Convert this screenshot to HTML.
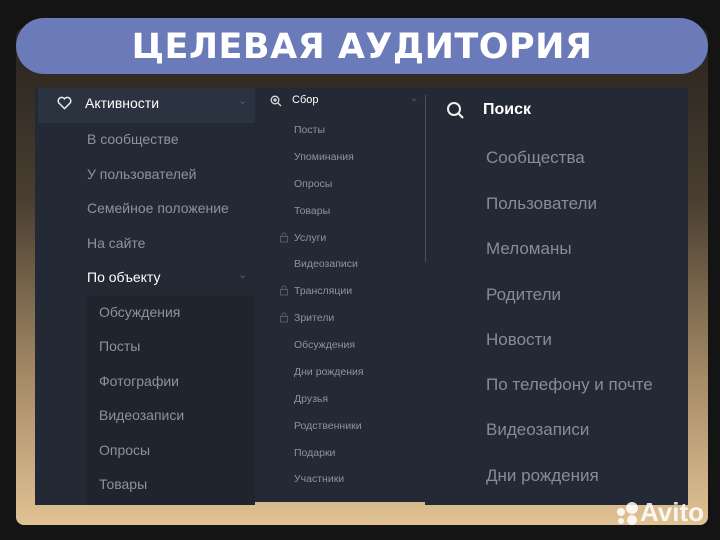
<!DOCTYPE html><html><head><meta charset="utf-8"><style>
*{margin:0;padding:0;box-sizing:border-box}
body{width:720px;height:540px;background:#141414;position:relative;overflow:hidden;font-family:"Liberation Sans","DejaVu Sans",sans-serif}
.card{position:absolute;left:16px;top:28px;width:692px;height:497px;border-radius:8px;background:linear-gradient(180deg,#27231e 0%,#4a3f31 35%,#a48a66 70%,#e0c294 100%)}
.pill{position:absolute;left:16px;top:18px;width:692px;height:56px;border-radius:28px;background:#6b7ab8;color:#fff;font:900 35px "DejaVu Sans","Liberation Sans",sans-serif;text-align:center;line-height:58px;letter-spacing:0.5px;transform-origin:center}
.panel{position:absolute;left:35px;top:88px;width:653px;height:417px;background:#242a35}
.t{position:absolute;white-space:nowrap}
.l{font-size:14px;color:#8e939b;left:87px}
.m{font-size:10.5px;color:#8e939b;left:294px}
.r{font-size:17px;color:#878c95;left:486px}
</style></head><body>
<div class="card"></div>
<div class="pill">ЦЕЛЕВАЯ АУДИТОРИЯ</div>
<div class="panel"></div>
<div style="position:absolute;left:38px;top:88px;width:217px;height:35px;background:#2c3340"></div>
<div style="position:absolute;left:87px;top:296px;width:168px;height:209px;background:#1f242d"></div>
<div style="position:absolute;left:425px;top:95px;width:1px;height:167px;background:#4a505a"></div>
<div style="position:absolute;left:255px;top:502px;width:170px;height:3px;background:#d6ba8c"></div>
<div style="position:absolute;left:425px;top:505px;width:283px;height:0"></div>
<svg class="t" style="left:57px;top:96px" width="15" height="14" viewBox="0 0 16 15"><path d="M8 13.5 L2 7.5 A3.4 3.4 0 0 1 8 3 A3.4 3.4 0 0 1 14 7.5 Z" fill="none" stroke="#eee" stroke-width="1.6"/></svg>
<div class="t" style="left:85px;top:95px;font-size:14px;color:#fff">Активности</div>
<div class="t" style="left:238px;top:94px;color:#5a606a;font-size:11px">⌄</div>
<div class="t l" style="top:131px">В сообществе</div>
<div class="t l" style="top:166px">У пользователей</div>
<div class="t l" style="top:200px">Семейное положение</div>
<div class="t l" style="top:235px">На сайте</div>
<div class="t l" style="top:269px;color:#fff">По объекту</div>
<div class="t" style="left:238px;top:268px;color:#5a606a;font-size:11px">⌄</div>
<div class="t l" style="left:99px;top:304px">Обсуждения</div>
<div class="t l" style="left:99px;top:338px">Посты</div>
<div class="t l" style="left:99px;top:373px">Фотографии</div>
<div class="t l" style="left:99px;top:407px">Видеозаписи</div>
<div class="t l" style="left:99px;top:442px">Опросы</div>
<div class="t l" style="left:99px;top:476px">Товары</div>
<svg class="t" style="left:270px;top:95px" width="12" height="12" viewBox="0 0 12 12"><circle cx="5" cy="5" r="3.8" fill="none" stroke="#ddd" stroke-width="1.3"/><path d="M7.8 7.8L11 11M5 3v4M3 5h4" stroke="#ddd" stroke-width="1.3"/></svg>
<div class="t" style="left:292px;top:94px;font-size:11px;color:#fff">Сбор</div>
<div class="t" style="left:410px;top:93px;color:#5a606a;font-size:10px">⌄</div>
<div class="t m" style="top:124px">Посты</div>
<div class="t m" style="top:151px">Упоминания</div>
<div class="t m" style="top:178px">Опросы</div>
<div class="t m" style="top:205px">Товары</div>
<div class="t m" style="top:232px">Услуги</div>
<div class="t m" style="top:258px">Видеозаписи</div>
<div class="t m" style="top:285px">Трансляции</div>
<div class="t m" style="top:312px">Зрители</div>
<div class="t m" style="top:339px">Обсуждения</div>
<div class="t m" style="top:366px">Дни рождения</div>
<div class="t m" style="top:393px">Друзья</div>
<div class="t m" style="top:420px">Родственники</div>
<div class="t m" style="top:447px">Подарки</div>
<div class="t m" style="top:473px">Участники</div>
<svg class="t" style="left:279px;top:232px" width="10" height="11"><rect x="1.5" y="4.5" width="7" height="5.5" fill="none" stroke="#555b64"/><path d="M3 4.5V3a2 2 0 0 1 4 0v1.5" fill="none" stroke="#555b64"/></svg>
<svg class="t" style="left:279px;top:285px" width="10" height="11"><rect x="1.5" y="4.5" width="7" height="5.5" fill="none" stroke="#555b64"/><path d="M3 4.5V3a2 2 0 0 1 4 0v1.5" fill="none" stroke="#555b64"/></svg>
<svg class="t" style="left:279px;top:312px" width="10" height="11"><rect x="1.5" y="4.5" width="7" height="5.5" fill="none" stroke="#555b64"/><path d="M3 4.5V3a2 2 0 0 1 4 0v1.5" fill="none" stroke="#555b64"/></svg>
<svg class="t" style="left:446px;top:101px" width="20" height="20" viewBox="0 0 20 20"><circle cx="8" cy="8" r="6" fill="none" stroke="#eee" stroke-width="2"/><path d="M12.5 12.5L17 17" stroke="#eee" stroke-width="2.2"/></svg>
<div class="t" style="left:483px;top:101px;font-size:16px;font-weight:bold;color:#fff">Поиск</div>
<div class="t r" style="top:148px">Сообщества</div>
<div class="t r" style="top:194px">Пользователи</div>
<div class="t r" style="top:239px">Меломаны</div>
<div class="t r" style="top:285px">Родители</div>
<div class="t r" style="top:330px">Новости</div>
<div class="t r" style="top:375px">По телефону и почте</div>
<div class="t r" style="top:420px">Видеозаписи</div>
<div class="t r" style="top:466px">Дни рождения</div>
<div class="t" style="left:640px;top:497px;font-size:26px;font-weight:bold;color:rgba(255,255,255,.85)">Avito</div>
<svg class="t" style="left:614px;top:501px" width="28" height="26"><circle cx="18" cy="7" r="6" fill="rgba(255,255,255,.85)"/><circle cx="7" cy="11" r="4" fill="rgba(255,255,255,.85)"/><circle cx="18" cy="19" r="5" fill="rgba(255,255,255,.85)"/><circle cx="7" cy="20" r="3" fill="rgba(255,255,255,.85)"/></svg>
</body></html>
